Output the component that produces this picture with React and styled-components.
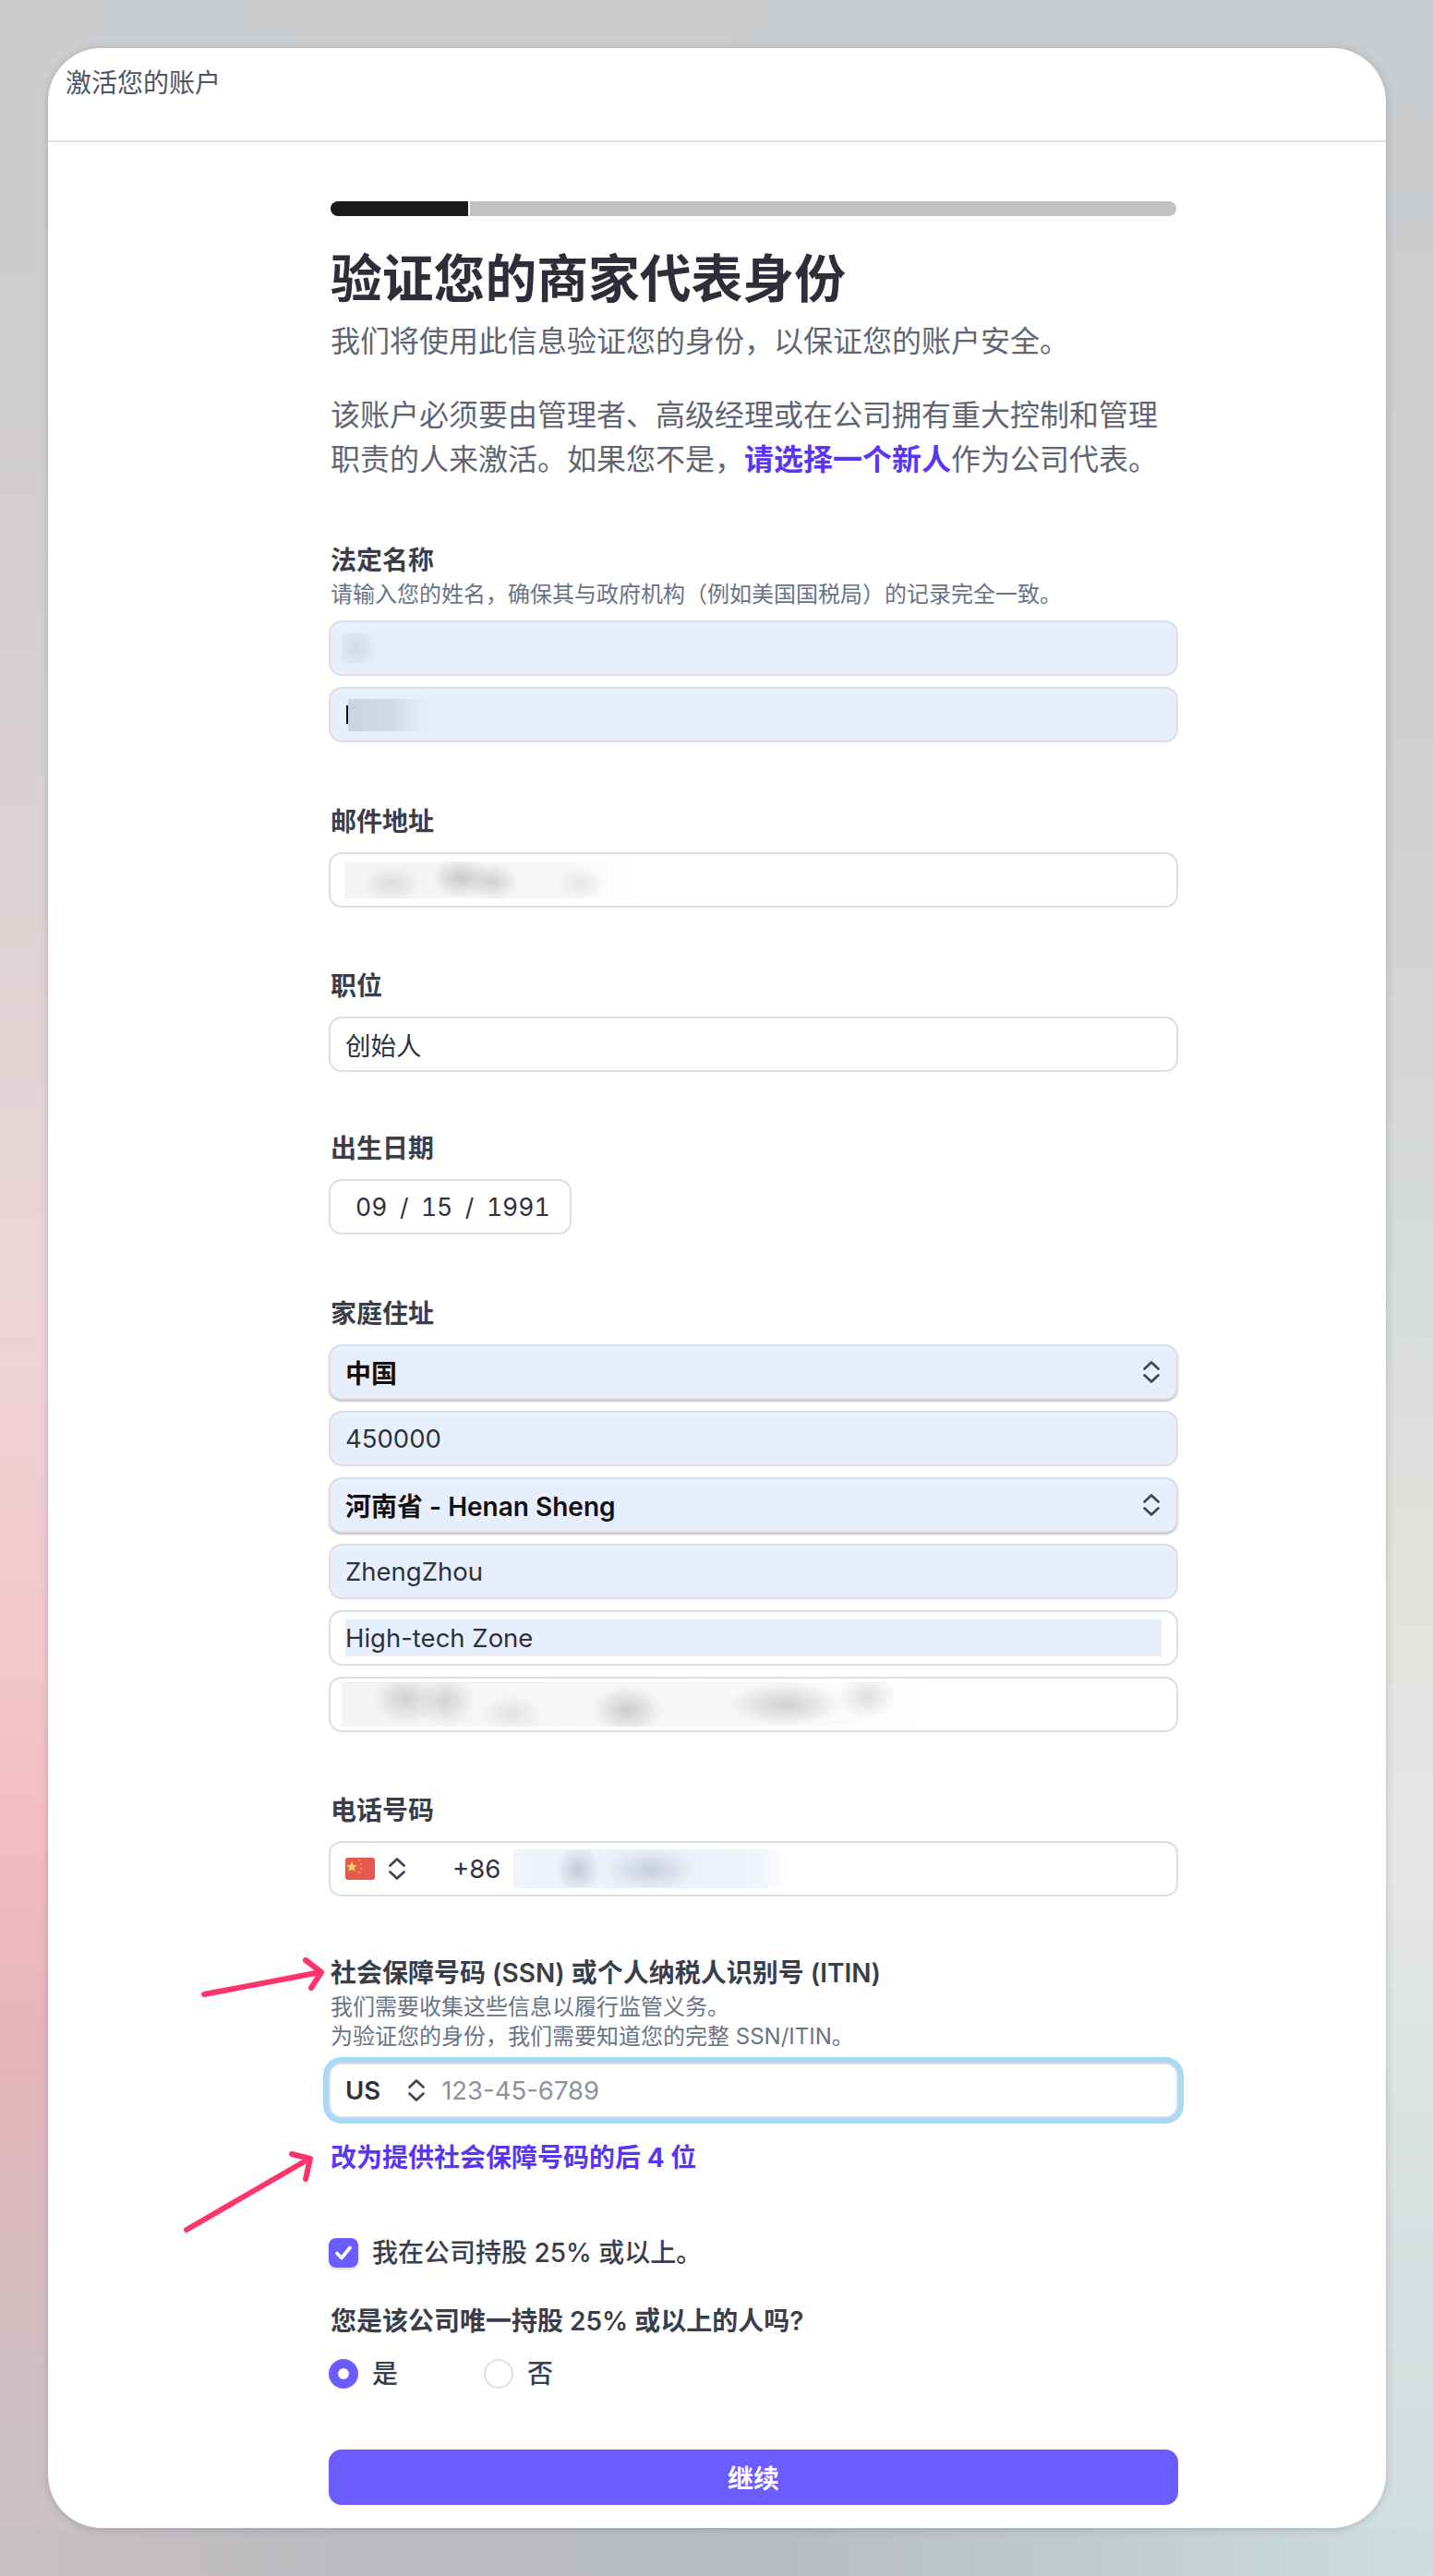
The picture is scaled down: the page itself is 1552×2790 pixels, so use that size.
import React from 'react'
import styled, { createGlobalStyle, css } from 'styled-components'

const GlobalStyle = createGlobalStyle`
  html, body {
    margin: 0;
    padding: 0;
  }
  body {
    font-family: Inter, "Noto Sans CJK SC", sans-serif;
    color: #30313d;
  }
  * {
    box-sizing: border-box;
  }
`

// page text sits 2px inside the edge of the inputs
const textInset = css`
  margin-left: 2px;
`

const Page = styled.div`
  position: relative;
  width: 1552px;
  height: 2790px;
  padding: 52px;
  overflow: hidden;
  background:
    linear-gradient(90deg, #cbcdcf, #c9ccce) top / 100% 52px no-repeat,
    linear-gradient(90deg, #c7c0c3 0%, #bcbbbf 25%, #b8bdc1 55%, #c0cacc 75%, #cfdedd 100%) bottom / 100% 52px no-repeat,
    linear-gradient(180deg, #cbcdcf 0%, #cfcdcd 14%, #dcd2d3 34%, #ecd5d9 50%, #f3c8cc 64%, #f2bcc2 72%, #e4b5bb 80%, #d0c0c4 92%, #c8c2c4 100%) left / 112px 100% no-repeat,
    linear-gradient(180deg, #c9ccce 0%, #cfcfd1 28%, #d8dbdc 50%, #e0e2dd 60%, #e6e7e6 72%, #d8e0e0 86%, #cfdedd 100%) right / 112px 100% no-repeat,
    #fff;
`

const Card = styled.div`
  width: 1449px;
  height: 2686px;
  background: #fff;
  border-radius: 58px;
  box-shadow: 0 1px 8px rgba(60, 66, 87, 0.25);
  overflow: hidden;
`

const Header = styled.header`
  height: 102px;
  padding: 18px 19px 0;
  font-size: 28px;
  line-height: 40px;
  color: #4f5564;
  border-bottom: 2px solid #dde1e6;
`

const Content = styled.main`
  width: 920px;
  margin-left: 304px;
  padding-top: 64px;
`

const Progress = styled.div`
  ${textInset}
  display: flex;
  gap: 2px;
  width: 916px;
  height: 16px;
  border-radius: 8px;
  overflow: hidden;
`

const ProgressFill = styled.div`
  width: 149px;
  background: #1a1a1a;
`

const ProgressRest = styled.div`
  flex: 1;
  background: #c2c2c2;
`

const Title = styled.h1`
  ${textInset}
  margin-top: 36px;
  margin-bottom: 0;
  font-size: 55.8px;
  line-height: 64px;
  font-weight: 700;
  color: #2e2e3a;
`

const Lead = styled.p`
  ${textInset}
  margin-top: 14px;
  margin-bottom: 0;
  font-size: 32px;
  line-height: 44px;
  color: #5f6573;
`

const Notice = styled.p`
  ${textInset}
  margin-top: 34px;
  margin-bottom: 0;
  font-size: 32px;
  line-height: 48px;
  color: #5f6573;
`

const NoticeLine = styled.span`
  display: block;
`

const TextLink = styled.a`
  color: #5b35f5;
  font-weight: 700;
`

const Section = styled.section`
  margin-top: ${p => p.$top || 67}px;
`

const Label = styled.div`
  ${textInset}
  font-size: 28px;
  line-height: 36px;
  font-weight: 600;
  color: #3a3e4a;
`

const HintBlock = styled.div`
  ${textInset}
  margin-top: 3px;
  font-size: 24px;
  line-height: 32px;
  color: #697386;
`

const Stack = styled.div`
  display: flex;
  flex-direction: column;
  gap: 12px;
  margin-top: ${p => p.$top || 15}px;
`

const Box = styled.div`
  display: flex;
  align-items: center;
  width: ${p => p.$width || '100%'};
  height: 60px;
  padding: 0 16px;
  font-size: 27.5px;
  color: #30313d;
  background: ${p => (p.$filled ? '#e8effc' : '#fff')};
  border: 2px solid #dadfe6;
  border-radius: 14px;
`

const SelectBox = styled(Box)`
  justify-content: space-between;
  padding-right: 17px;
  font-weight: 600;
  font-size: 28px;
  color: #111;
  box-shadow: 0 2px 2px rgba(60, 66, 87, 0.32);
`

const AutofillText = styled.div`
  flex: 1;
  height: 40px;
  line-height: 40px;
  background: #e8effc;
`

const Redaction = styled.div`
  flex: none;
  width: ${p => p.$width}px;
  height: ${p => p.$height}px;
  margin-left: ${p => p.$left || 0}px;
  background: ${p => p.$tint};
`

const Caret = styled.span`
  flex: none;
  width: 2px;
  height: 20px;
  margin-left: 1px;
  background: #111;
`

const DateText = styled.div`
  display: flex;
  gap: 13.5px;
  padding-left: 11px;
  font-size: 26.5px;
  font-variant-numeric: tabular-nums;
`

const FlagWrap = styled.svg`
  width: 32px;
  height: 24px;
  flex: none;
`

const ChevronWrap = styled.svg`
  width: 20px;
  height: 26px;
  flex: none;
  margin-left: ${p => p.$left || 0}px;
`

const DialCode = styled.span`
  margin-left: 50px;
`

const FocusRing = styled(Box)`
  box-shadow: 0 0 0 6px #a9d8f7;
`

const Country = styled.span`
  font-weight: 600;
`

const Placeholder = styled.span`
  margin-left: 17px;
  color: #8a92a0;
`

const LinkRow = styled.div`
  ${textInset}
  margin-top: 25px;
  font-size: 28px;
  line-height: 36px;
`

const CheckRow = styled.div`
  display: flex;
  align-items: center;
  gap: 15px;
  margin-top: ${p => p.$top || 0}px;
  font-size: 28px;
  line-height: 36px;
  font-weight: 500;
  color: #3a3e4a;
`

const Checkbox = styled.span`
  display: flex;
  align-items: center;
  justify-content: center;
  width: 32px;
  height: 32px;
  background: #6a5cff;
  border-radius: 8px;
  box-shadow: 0 2px 3px rgba(60, 66, 87, 0.2);
`

const RadioRow = styled.div`
  display: flex;
  margin-top: 21px;
`

const RadioItem = styled(CheckRow)`
  width: 168px;
`

const Radio = styled.span`
  width: 32px;
  height: 32px;
  border-radius: 50%;
  background: #fff;
  border: ${p => (p.$on ? '10px solid #6a5cff' : '2px solid #dadfe6')};
`

const Button = styled.button`
  display: block;
  width: 100%;
  height: 60px;
  margin-top: 64px;
  font: 600 28px Inter, "Noto Sans CJK SC", sans-serif;
  color: #fff;
  background: #6a5cff;
  border: none;
  border-radius: 14px;
`

const Arrow = styled.svg`
  position: absolute;
  left: 0;
  top: 0;
  width: 1552px;
  height: 2790px;
  pointer-events: none;
`

const Chevrons = ({ left }) => (
  <ChevronWrap $left={left} viewBox="0 0 20 26">
    <path d="M2.5 9.5 L10 2.5 L17.5 9.5 M2.5 16.5 L10 23.5 L17.5 16.5" fill="none" stroke="#3f4555" strokeWidth="2.7" strokeLinecap="round" strokeLinejoin="round" />
  </ChevronWrap>
)

const blob = (x, y, rx, ry, color) => `radial-gradient(ellipse ${rx}px ${ry}px at ${x}px ${y}px, ${color}, transparent)`

export default function App() {
  return (
    <Page>
      <GlobalStyle />
      <Card>
        <Header>激活您的账户</Header>
        <Content>
          <Progress>
            <ProgressFill />
            <ProgressRest />
          </Progress>
          <Title>验证您的商家代表身份</Title>
          <Lead>我们将使用此信息验证您的身份，以保证您的账户安全。</Lead>
          <Notice>
            <NoticeLine>该账户必须要由管理者、高级经理或在公司拥有重大控制和管理</NoticeLine>
            <NoticeLine>
              职责的人来激活。如果您不是，<TextLink>请选择一个新人</TextLink>作为公司代表。
            </NoticeLine>
          </Notice>

          <Section $top={67}>
            <Label>法定名称</Label>
            <HintBlock>请输入您的姓名，确保其与政府机构（例如美国国税局）的记录完全一致。</HintBlock>
            <Stack $top={12}>
              <Box $filled>
                <Redaction $width={70} $height={34} $left={-4} $tint={`${blob(16, 17, 24, 24, '#d3d9e6')}, linear-gradient(90deg, #e3eafa, #e8effc)`} />
              </Box>
              <Box $filled>
                <Caret />
                <Redaction $width={100} $height={35} $tint="linear-gradient(90deg, #ccd3df, #d2d9e5 45%, #e4ebf8 80%, #e8effc)" />
              </Box>
            </Stack>
          </Section>

          <Section $top={68}>
            <Label>邮件地址</Label>
            <Stack>
              <Box>
                <Redaction $width={318} $height={40} $left={-1} $tint={`${blob(126, 18, 32, 22, '#c8c8c8')}, ${blob(160, 22, 28, 20, '#d0d0d0')}, ${blob(51, 24, 32, 20, '#dcdcdc')}, ${blob(255, 24, 26, 20, '#e6e6e6')}, linear-gradient(90deg, #f4f4f4, #f6f6f6 70%, #fff)`} />
              </Box>
            </Stack>
          </Section>

          <Section>
            <Label>职位</Label>
            <Stack>
              <Box>创始人</Box>
            </Stack>
          </Section>

          <Section $top={65}>
            <Label>出生日期</Label>
            <Stack>
              <Box $width="263px">
                <DateText>
                  <span>09</span>
                  <span>/</span>
                  <span>15</span>
                  <span>/</span>
                  <span>1991</span>
                </DateText>
              </Box>
            </Stack>
          </Section>

          <Section $top={68}>
            <Label>家庭住址</Label>
            <Stack>
              <SelectBox $filled>
                中国
                <Chevrons />
              </SelectBox>
              <Box $filled>450000</Box>
              <SelectBox $filled>
                河南省 - Henan Sheng
                <Chevrons />
              </SelectBox>
              <Box $filled>ZhengZhou</Box>
              <Box>
                <AutofillText>High-tech Zone</AutofillText>
              </Box>
              <Box>
                <Redaction $width={632} $height={48} $left={-4} $tint={`${blob(69, 18, 36, 28, '#d0d0d0')}, ${blob(112, 20, 32, 28, '#d2d2d2')}, ${blob(184, 34, 32, 20, '#e2e2e2')}, ${blob(309, 30, 38, 26, '#cccccc')}, ${blob(481, 24, 62, 24, '#d0d0d0')}, ${blob(569, 16, 32, 24, '#dedede')}, linear-gradient(90deg, #f5f5f5, #f7f7f7 70%, #fff)`} />
              </Box>
            </Stack>
          </Section>

          <Section>
            <Label>电话号码</Label>
            <Stack>
              <Box>
                <FlagWrap viewBox="0 0 32 24">
                  <rect width="32" height="24" rx="3" fill="#e5594f" />
                  <path d="M7 4 L8.6 8 L13 8.2 L9.6 10.9 L10.8 15 L7 12.7 L3.2 15 L4.4 10.9 L1 8.2 L5.4 8 Z" fill="#fbd35c" />
                  <circle cx="15" cy="3" r="1.1" fill="#f2a94e" />
                  <circle cx="17" cy="7" r="1.1" fill="#f2a94e" />
                  <circle cx="17" cy="12" r="1.1" fill="#f2a94e" />
                  <circle cx="15" cy="16" r="1.1" fill="#f2a94e" />
                </FlagWrap>
                <Chevrons left={14} />
                <DialCode>+86</DialCode>
                <Redaction $width={295} $height={42} $left={14} $tint={`${blob(70, 22, 24, 26, '#c5cbd8')}, ${blob(148, 22, 48, 22, '#c8cedb')}, linear-gradient(90deg, #f0f4fc, #e8eefa 50%, #f0f4fc 90%, #fff)`} />
              </Box>
            </Stack>
          </Section>

          <Section $top={65}>
            <Label>社会保障号码 (SSN) 或个人纳税人识别号 (ITIN)</Label>
            <HintBlock>
              我们需要收集这些信息以履行监管义务。
              <br />
              为验证您的身份，我们需要知道您的完整 SSN/ITIN。
            </HintBlock>
            <Stack $top={12}>
              <FocusRing>
                <Country>US</Country>
                <Chevrons left={29} />
                <Placeholder>123-45-6789</Placeholder>
              </FocusRing>
            </Stack>
            <LinkRow>
              <TextLink>改为提供社会保障号码的后 4 位</TextLink>
            </LinkRow>
          </Section>

          <CheckRow $top={67}>
            <Checkbox>
              <svg width="22" height="22" viewBox="0 0 22 22">
                <path d="M4 11.5 L9 16.5 L18 5.5" fill="none" stroke="#fff" strokeWidth="3.8" strokeLinecap="round" strokeLinejoin="round" />
              </svg>
            </Checkbox>
            我在公司持股 25% 或以上。
          </CheckRow>

          <Section $top={38}>
            <Label>您是该公司唯一持股 25% 或以上的人吗?</Label>
            <RadioRow>
              <RadioItem>
                <Radio $on />是
              </RadioItem>
              <RadioItem>
                <Radio />否
              </RadioItem>
            </RadioRow>
          </Section>

          <Button>继续</Button>
        </Content>
      </Card>

      <Arrow viewBox="0 0 1552 2790">
        <path d="M221 2160 L347 2136 M331 2123 L348 2136 L337 2153" fill="none" stroke="#ff3468" strokeWidth="6" strokeLinecap="round" strokeLinejoin="round" />
        <path d="M202 2415 L335 2338 M316 2333 L336 2338 L331 2360" fill="none" stroke="#ff3468" strokeWidth="6" strokeLinecap="round" strokeLinejoin="round" />
      </Arrow>
    </Page>
  )
}
